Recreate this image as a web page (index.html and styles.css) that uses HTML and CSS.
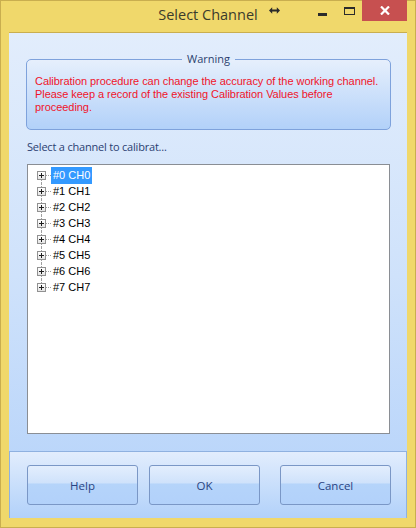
FILE: index.html
```html
<!DOCTYPE html>
<html>
<head>
<meta charset="utf-8">
<link rel="stylesheet" href="styles.css">
</head>
<body>
<div class="window">
  <div class="titlebar">
    <div class="title">Select Channel</div>
    <div class="resize-icon">
      <svg width="11" height="7" viewBox="0 0 11 7"><path d="M0 3.5 L3.2 0.3 V2.5 H7.8 V0.3 L11 3.5 L7.8 6.7 V4.5 H3.2 V6.7 Z" fill="#2b2b2b"/></svg>
    </div>
    <div class="ctrl min"><span class="min-bar"></span></div>
    <div class="ctrl max"><span class="max-box"></span></div>
    <div class="ctrl close">
      <svg width="10" height="9" viewBox="0 0 10 9"><path d="M1 0.5 L9 8.5 M9 0.5 L1 8.5" stroke="#fff" stroke-width="2.2"/></svg>
    </div>
  </div>
  <div class="client">
    <fieldset class="warning">
      <legend>Warning</legend>
      <p>Calibration procedure can change the accuracy of the working channel. Please keep a record of the existing Calibration Values before proceeding.</p>
    </fieldset>
    <div class="prompt">Select a channel to calibrat...</div>
    <div class="tree">
      <div class="node first"><span class="exp"></span><span class="dots"></span><span class="lbl sel">#0 CH0</span></div>
      <div class="node"><span class="exp"></span><span class="dots"></span><span class="lbl">#1 CH1</span></div>
      <div class="node"><span class="exp"></span><span class="dots"></span><span class="lbl">#2 CH2</span></div>
      <div class="node"><span class="exp"></span><span class="dots"></span><span class="lbl">#3 CH3</span></div>
      <div class="node"><span class="exp"></span><span class="dots"></span><span class="lbl">#4 CH4</span></div>
      <div class="node"><span class="exp"></span><span class="dots"></span><span class="lbl">#5 CH5</span></div>
      <div class="node"><span class="exp"></span><span class="dots"></span><span class="lbl">#6 CH6</span></div>
      <div class="node last"><span class="exp"></span><span class="dots"></span><span class="lbl">#7 CH7</span></div>
    </div>
    <div class="buttons">
      <button class="btn help">Help</button>
      <button class="btn ok">OK</button>
      <button class="btn cancel">Cancel</button>
    </div>
  </div>
</div>
</body>
</html>
```
FILE: styles.css
```css
* { box-sizing: border-box; }
html, body { margin: 0; padding: 0; }
body { width: 416px; height: 528px; overflow: hidden; }

.window {
  width: 416px;
  height: 528px;
  background: #f0d86b;
  border: 1px solid #c9ae4f;
  display: flex;
  flex-direction: column;
}

.titlebar {
  height: 31px;
  position: relative;
  flex: none;
}
.title {
  position: absolute;
  left: 0;
  right: 0;
  top: 4px;
  text-align: center;
  font-family: "Open Sans", sans-serif;
  font-size: 14.5px;
  color: #3b3b2c;
}
.resize-icon {
  position: absolute;
  left: 268px;
  top: 6px;
}
.resize-icon svg { display: block; }
.ctrl { position: absolute; top: -1px; height: 21px; }
.min { left: 317px; width: 9px; }
.min-bar { position: absolute; left: 0; top: 13px; width: 9px; height: 3px; background: #2b2b2b; }
.max { left: 343px; width: 11px; }
.max-box { position: absolute; left: 0; top: 7px; width: 11px; height: 8px; border: 1px solid #2b2b2b; border-top-width: 2px; }
.close {
  left: 361px;
  width: 45px;
  background: #c75050;
  display: flex;
  align-items: center;
  justify-content: center;
}

.client {
  margin: 0 8px 9px 8px;
  flex: 1;
  background: linear-gradient(#e2edfc 0%, #cfe2fb 50%, #b4d2fa 100%);
  border-top: 1px solid #c9ae4f;
  display: flex;
  flex-direction: column;
  font-family: "Liberation Sans", Arial, sans-serif;
}

.warning {
  margin: 20px 16px 0 17px;
  height: 77px;
  padding: 10px 8px 0 8px;
  border: 1px solid #7ea2dc;
  border-radius: 5px;
  background: linear-gradient(#e6effc, #b2d1f9);
}
.warning legend {
  margin: 0 auto;
  padding: 0 5px;
  font-family: "Open Sans", sans-serif;
  font-size: 11px;
  color: #2a3f6e;
  line-height: 12px;
}
.warning p {
  margin: 0;
  font-size: 11px;
  line-height: 13px;
  color: #f0142a;
  letter-spacing: -0.05px;
}

.prompt {
  margin: 9px 0 0 18px;
  font-family: "Open Sans", sans-serif;
  font-size: 11px;
  line-height: 16px;
  color: #2b3f72;
  letter-spacing: -0.2px;
}

.tree {
  margin: 9px 17px 0 18px;
  height: 270px;
  background: #fff;
  border: 1px solid #8a8e94;
  padding-top: 2px;
}
.node {
  height: 16px;
  display: flex;
  align-items: center;
  position: relative;
  font-size: 11px;
  color: #000;
}
.node::before {
  content: "";
  position: absolute;
  left: 13px;
  top: 0;
  bottom: 0;
  border-left: 1px dotted #a0a0a0;
}
.node.first::before { top: 8px; }
.node.last::before { bottom: 8px; }
.exp {
  margin-left: 9px;
  width: 9px;
  height: 9px;
  border: 1px solid #919191;
  background: linear-gradient(#fff, #e4e4e4) ;
  position: relative;
  z-index: 1;
  flex: none;
}
.exp::before {
  content: "";
  position: absolute;
  left: 1px; top: 3px; width: 5px; height: 1px;
  background: #1f1f1f;
}
.exp::after {
  content: "";
  position: absolute;
  left: 3px; top: 1px; width: 1px; height: 5px;
  background: #1f1f1f;
}
.dots {
  width: 5px;
  border-top: 1px dotted #a0a0a0;
  flex: none;
}
.lbl {
  padding: 0 2px;
  height: 16px;
  line-height: 16px;
}
.lbl.sel {
  background: #3399ff;
  color: #fff;
  height: 17px;
  line-height: 17px;
}

.buttons {
  margin-top: auto;
  height: 67px;
  border-top: 1px solid #8fb1e0;
  border-left: 1px solid #8fb1e0;
  border-right: 1px solid #8fb1e0;
  background: linear-gradient(#e2edfd, #c4dcfb 60%, #b2d1fa);
  display: flex;
  align-items: flex-start;
  padding: 13px 0 0 17px;
}
.btn {
  width: 111px;
  height: 40px;
  border: 1px solid #7a97c6;
  border-radius: 3px;
  background: linear-gradient(#e3eefd 0%, #cfe2fb 45%, #b5d4fa 47%, #b2d1fa 100%);
  font-family: "Open Sans", sans-serif;
  font-size: 11.5px;
  color: #2a4482;
  padding: 0;
}
.ok { margin-left: 11px; }
.cancel { margin-left: 20px; }
```
